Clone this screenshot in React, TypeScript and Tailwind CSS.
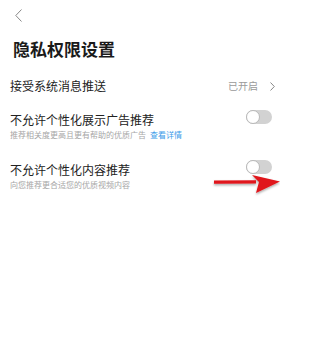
function Toggle() {
  return (
    <div className="relative h-[14px] w-[26px] rounded-full bg-[#d2d2d2]">
      <div className="absolute left-0 top-0 h-[14px] w-[14px] rounded-full border border-[#b8b8b8] bg-white" />
    </div>
  )
}

function SwitchRow({ title, desc, link }: { title: string; desc: string; link?: string }) {
  return (
    <div className="flex items-start justify-between pl-[10px] pr-[8px]">
      <div>
        <div className="text-[12px] leading-[16px] text-[#222]">{title}</div>
        <div className="mt-[1px] text-[8px] leading-[12px] text-[#a6a6a6]">
          {desc}
          {link && <span className="ml-[4px] text-[#3d9be9]">{link}</span>}
        </div>
      </div>
      <div className="mt-[-2px]">
        <Toggle />
      </div>
    </div>
  )
}

export default function App() {
  return (
    <div
      className="relative h-[360px] w-[280px] overflow-hidden bg-white"
      style={{ fontFamily: '"Noto Sans CJK SC", "Noto Sans", sans-serif' }}
    >
      {/* 返回 */}
      <div className="flex h-[30px] items-center pl-[15px]">
        <svg width="7" height="13" viewBox="0 0 7 13" fill="none">
          <path d="M6.5 0.5 L0.8 6.5 L6.5 12.5" stroke="#888" strokeWidth="1" />
        </svg>
      </div>

      <h1 className="mt-[9px] pl-[13px] text-[17px] font-bold leading-[20px] text-[#1a1a1a]">隐私权限设置</h1>

      <div className="mt-[19px] flex items-center justify-between pl-[10px] pr-[5px]">
        <span className="text-[12px] leading-[16px] text-[#222]">接受系统消息推送</span>
        <span className="flex items-center gap-[12px] text-[10px] leading-[16px] text-[#9a9a9a]">
          已开启
          <svg width="5" height="9" viewBox="0 0 5 9" fill="none">
            <path d="M0.5 0.5 L4.3 4.5 L0.5 8.5" stroke="#888" strokeWidth="1" />
          </svg>
        </span>
      </div>

      <div className="mt-[18px]">
        <SwitchRow title="不允许个性化展示广告推荐" desc="推荐相关度更高且更有帮助的优质广告" link="查看详情" />
      </div>
      <div className="mt-[21px]">
        <SwitchRow title="不允许个性化内容推荐" desc="向您推荐更合适您的优质视频内容" />
      </div>

      {/* 红色箭头标注 */}
      <svg className="absolute left-[212px] top-[173px]" width="68" height="24" viewBox="0 0 68 24">
        <defs>
          <filter id="sh" x="-10%" y="-30%" width="120%" height="160%">
            <feDropShadow dx="0" dy="1.5" stdDeviation="1" floodColor="#000" floodOpacity="0.35" />
          </filter>
        </defs>
        <g filter="url(#sh)">
          <path d="M2 7.5 L44 7.2 L44 10.5 L2 10.8 Z" fill="#e0141a" />
          <path d="M40 2 L68 8.5 L44 20 L47 9 Z" fill="#e0141a" />
        </g>
      </svg>
    </div>
  )
}
